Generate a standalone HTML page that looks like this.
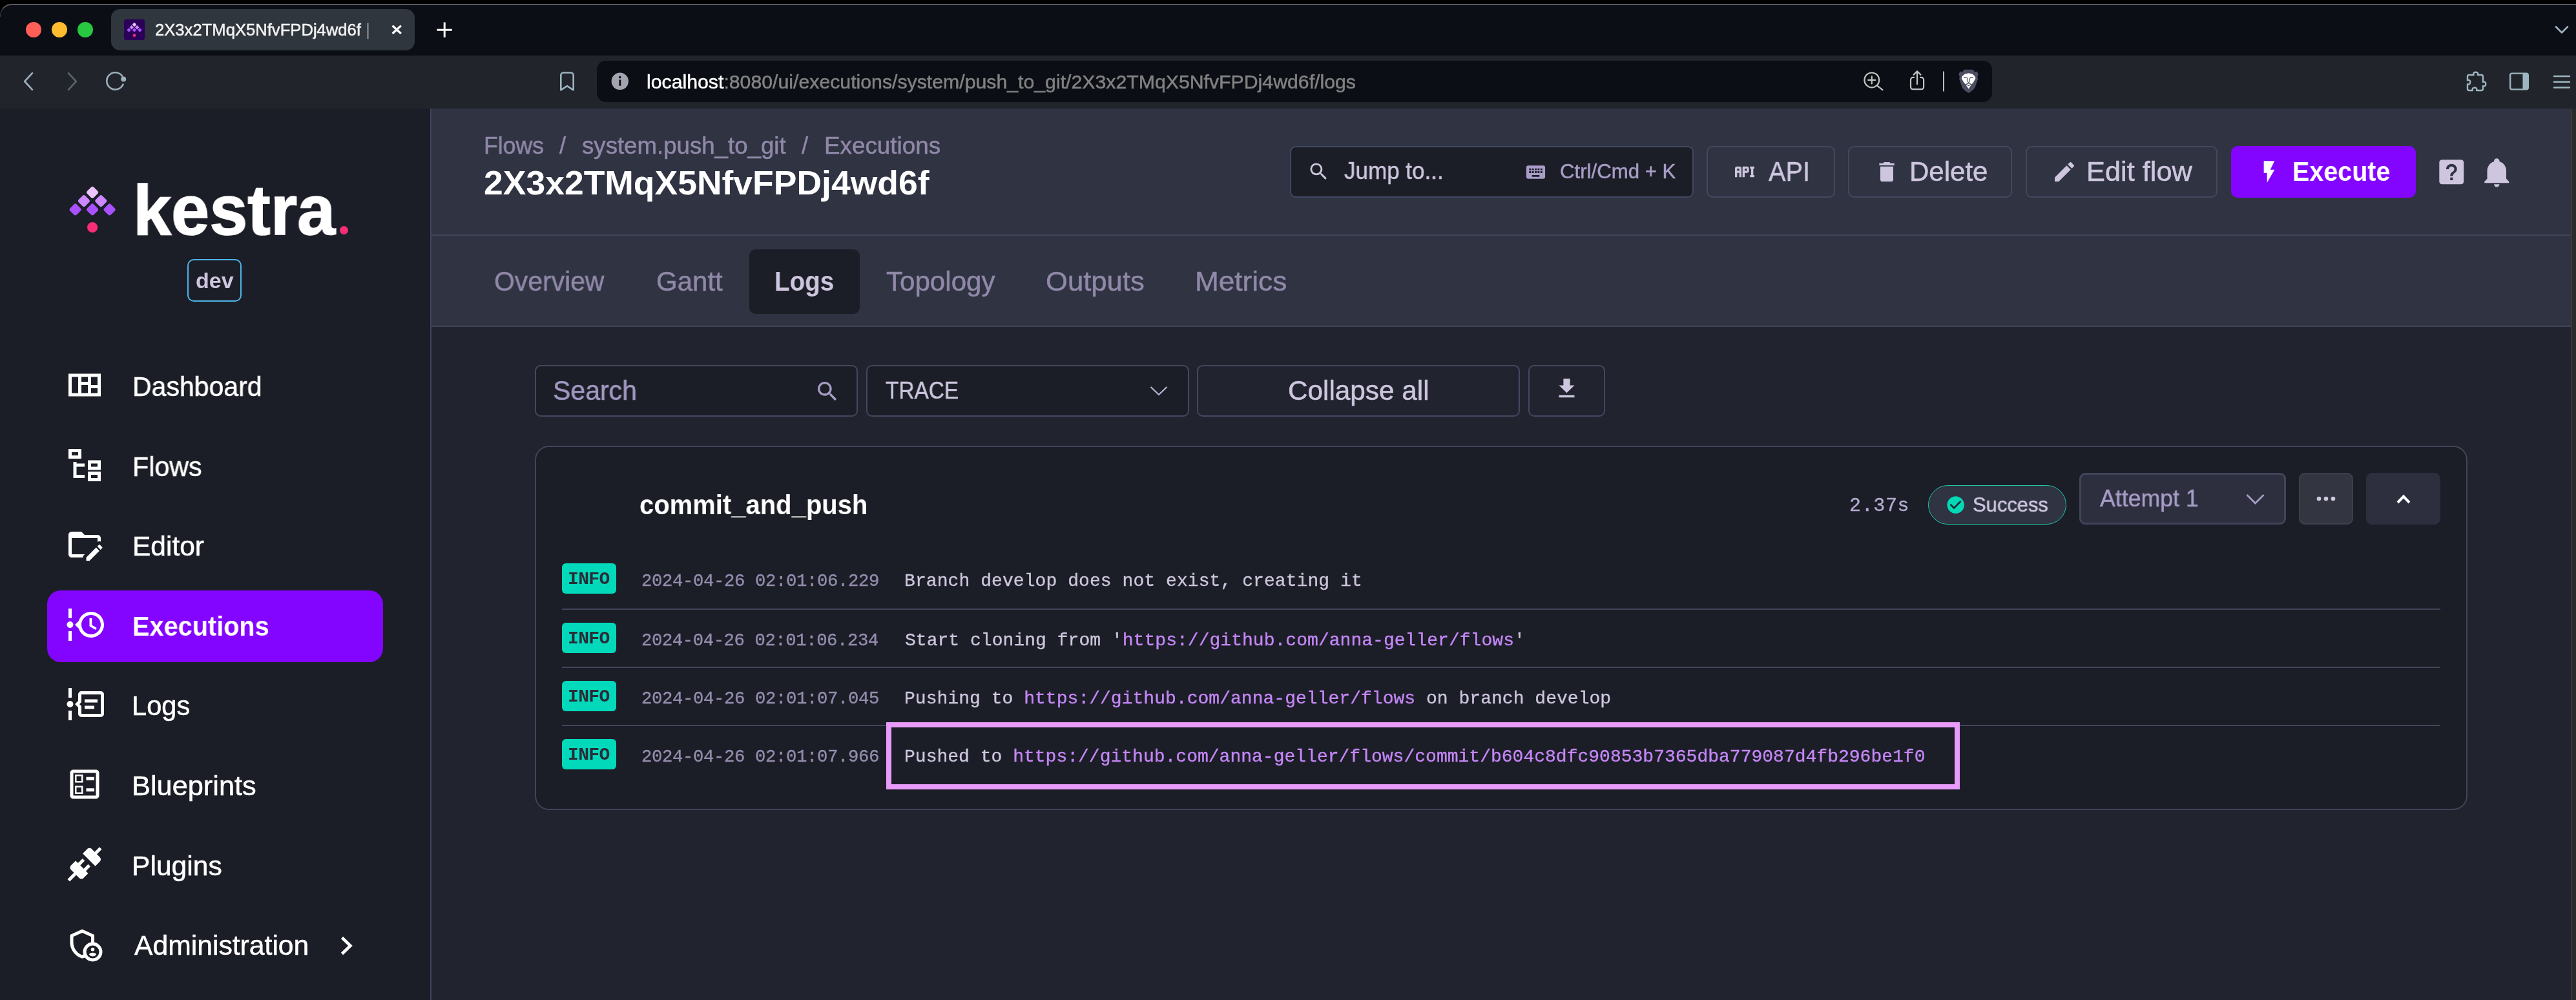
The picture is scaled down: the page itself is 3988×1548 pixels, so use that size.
<!DOCTYPE html>
<html lang="en">
<head>
<meta charset="utf-8">
<title>2X3x2TMqX5NfvFPDj4wd6f | Kestra</title>
<style>
*{box-sizing:border-box;margin:0;padding:0}
html,body{width:3988px;height:1548px;overflow:hidden;background:#000}
body{position:relative;font-family:"Liberation Sans",sans-serif;color:#fff}
.a{position:absolute}
.w{display:block;position:static}
.t{position:absolute;white-space:pre;line-height:1;transform-origin:0 0;will-change:transform}
.gs{will-change:transform}
.mono{font-family:"Liberation Mono",monospace}
.t{-webkit-text-stroke:0.5px currentColor}
.t.mono{-webkit-text-stroke:0.35px currentColor}
svg{position:absolute;overflow:visible}
/* ---------- browser chrome ---------- */
#win{left:0;top:7px;width:3988px;height:1541px;background:#0c0e16;border-radius:18px 0 0 0}
#topline{left:0;top:6px;width:3988px;height:20px;border-top:2px solid #5a5a5e;border-left:1px solid #3a3a3e;border-radius:18px 0 0 0}
#toolbar{left:0;top:86px;width:3988px;height:82px;background:#21252b}
#tab{left:172px;top:14px;width:470px;height:64px;background:#30363d;border-radius:14px}
#urlbar{left:924px;top:94px;width:2160px;height:64px;background:#0c0e16;border-radius:14px}
.dot{width:24px;height:24px;border-radius:50%;top:34px}
/* ---------- app ---------- */
#side{left:0;top:168px;width:666px;height:1380px;background:#1c1e27}
#sideb{left:666px;top:168px;width:2px;height:1380px;background:#404559}
#head{left:668px;top:168px;width:3312px;height:196px;background:#2f3342}
#headb{left:668px;top:363px;width:3312px;height:2px;background:#404559}
#tabs{left:668px;top:365px;width:3312px;height:140px;background:#2f3342}
#tabsb{left:668px;top:504px;width:3312px;height:2px;background:#404559}
#content{left:668px;top:506px;width:3312px;height:1042px;background:#21242e}
#scroll{left:3980px;top:168px;width:8px;height:1380px;background:#2b2b2b;border-left:2px solid #3a3a3a}
.box{border:2px solid #434860;border-radius:9px;background:#1c1e27}
.btn{border:2px solid #434860;border-radius:9px;background:#2f3342}
.c1{color:#cdc6de}
.c2{color:#9088a8}
.lnk{color:#c587f8}
</style>
</head>
<body>
<div class="a" id="win"></div>
  <!-- tab strip -->
  <div class="a dot" style="left:40px;background:#ff5f57"></div>
  <div class="a dot" style="left:80px;background:#febc2e"></div>
  <div class="a dot" style="left:120px;background:#28c840"></div>
  <div class="a" id="tab"></div>
  <!-- toolbar -->
  <div class="a" id="toolbar"></div>
  <div class="a" id="urlbar"></div>

  <!-- app -->
  <div class="a" id="side"></div>
  <div class="a" id="sideb"></div>
  <div class="a" id="head"></div>
  <div class="a" id="headb"></div>
  <div class="a" id="tabs"></div>
  <div class="a" id="tabsb"></div>
  <div class="a" id="content"></div>
  <div class="a" id="scroll"></div>
<!--CHROME-->
<header class="w">
<div class="t" id="tabtitle" style="left:240.0px;top:33.6px;font-size:25px;transform:scaleX(1.0249);color:#f2f2f2">2X3x2TMqX5NfvFPDj4wd6f <span style="color:#7d8186">|</span></div>
<div class="t" id="url" style="left:1001.0px;top:111.8px;font-size:30px;transform:scaleX(1.0083);color:#828282"><span style="color:#fff">localhost</span>:8080/ui/executions/system/push_to_git/2X3x2TMqX5NfvFPDj4wd6f/logs</div>
<svg style="left:0;top:0" width="3988" height="168" viewBox="0 0 3988 168" fill="none" stroke-linecap="round" stroke-linejoin="round">
<rect x="192" y="30" width="32" height="32" rx="3.5" fill="#2a0059"/>
<rect x="205.65" y="35.75" width="4.7" height="4.7" rx="0.7" fill="#ecc5ff" transform="rotate(45 208 38.1)"/>
<rect x="201.45" y="39.95" width="4.7" height="4.7" rx="0.7" fill="#cd88ff" transform="rotate(45 203.8 42.3)"/>
<rect x="209.85" y="39.95" width="4.7" height="4.7" rx="0.7" fill="#cd88ff" transform="rotate(45 212.2 42.3)"/>
<rect x="197.25" y="44.15" width="4.7" height="4.7" rx="0.7" fill="#a950ff" transform="rotate(45 199.6 46.5)"/>
<rect x="205.65" y="44.15" width="4.7" height="4.7" rx="0.7" fill="#a950ff" transform="rotate(45 208 46.5)"/>
<rect x="214.05" y="44.15" width="4.7" height="4.7" rx="0.7" fill="#a950ff" transform="rotate(45 216.4 46.5)"/>
<circle cx="208" cy="54.7" r="2.3" fill="#f62e76"/>
<path d="M607.6 39.8L620.8 52M620.8 39.8L607.6 52" stroke="#fff" stroke-width="3.2" stroke-linecap="butt"/>
<path d="M676.5 46.2H699.8M688.2 34.5V57.8" stroke="#fff" stroke-width="3" stroke-linecap="butt"/>
<path d="M3957 41.5L3966 50.5L3975 41.5" stroke="#9db5c0" stroke-width="2.6"/>
<path d="M50 113.2L38.2 126L50 138.8" stroke="#9db0bb" stroke-width="2.6"/>
<path d="M106 113.2L117.8 126L106 138.8" stroke="#59636b" stroke-width="2.6"/>
<path d="M190.6 130.6A13.2 13.2 0 1 1 189.4 118.0" stroke="#9db0bb" stroke-width="2.6"/>
<circle cx="191.2" cy="122.6" r="4" fill="#9db0bb"/>
<path d="M868.3 139.3V116.5A4 4 0 0 1 872.3 112.5H883.7A4 4 0 0 1 887.7 116.5V139.3L878 133.2Z" stroke="#9db5c0" stroke-width="2.6"/>
<circle cx="959.8" cy="125.8" r="13.2" fill="#a3a4b0"/>
<rect x="958.4" y="123.4" width="2.9" height="9.4" fill="#0c0e16"/><circle cx="959.8" cy="119.6" r="1.8" fill="#0c0e16"/>
<circle cx="2897.8" cy="123.9" r="11.4" stroke="#c3c3c3" stroke-width="2.2"/>
<path d="M2892.3 123.9H2903.3M2897.8 118.4V129.4M2906.2 132.6L2914.4 139.2" stroke="#c3c3c3" stroke-width="2.2"/>
<path d="M2963 119.9H2961.5A3.5 3.5 0 0 0 2958 123.4V134.7A3.5 3.5 0 0 0 2961.5 138.2H2974.6A3.5 3.5 0 0 0 2978.1 134.7V123.4A3.5 3.5 0 0 0 2974.6 119.9H2973" stroke="#c3c3c3" stroke-width="2.2"/>
<path d="M2968 130.2V110.6M2962.6 115.6L2968 110.2L2973.4 115.6" stroke="#c3c3c3" stroke-width="2.2"/>
<path d="M3009 110.4V141.4" stroke="#bdbdbd" stroke-width="2" stroke-linecap="butt"/>
<path d="M3041 107.8H3054.2L3057.5 111.4L3061 110.6L3062.8 115.4L3061.4 118.6L3062 122.5L3057.6 135.2C3056.4 138 3052 141.2 3047.6 144C3043.2 141.2 3038.8 138 3037.6 135.2L3033.2 122.5L3033.8 118.6L3032.4 115.4L3034.2 110.6L3037.7 111.4Z" fill="#4c4d5f" stroke="none"/>
<path d="M3047.6 113.2L3053.4 114.4L3057.6 118.2L3058.4 121.6L3055 127.6L3052 131L3047.6 137.6L3043.2 131L3040.2 127.6L3036.8 121.6L3037.6 118.2L3041.8 114.4Z" fill="#fff" stroke="none"/>
<path d="M3040.6 119.6L3045.4 120.6L3046.4 126.6L3047.6 127.6L3048.8 126.6L3049.8 120.6L3054.6 119.6M3043.2 130.4L3047.6 128.8L3052 130.4L3047.6 132.6Z" stroke="#4c4d5f" stroke-width="1.1" fill="none"/>
<path d="M3822.5 116H3829.6C3826.6 110.3 3838.9 110.3 3835.9 116H3841.5A2.5 2.5 0 0 1 3844 118.5V127C3849.7 124 3849.7 136 3844 133V137.5A2.5 2.5 0 0 1 3841.5 140H3834C3837 134.3 3825 134.3 3828 140H3822.5A2.5 2.5 0 0 1 3820 137.5V130.2C3825.7 133 3825.7 121.5 3820 124.3V118.5A2.5 2.5 0 0 1 3822.5 116Z" stroke="#9db5c0" stroke-width="2.4"/>
<rect x="3886.2" y="113.6" width="27.6" height="24.8" rx="2.6" stroke="#9db5c0" stroke-width="2.4"/><path d="M3905.5 113.6H3911.2A2.6 2.6 0 0 1 3913.8 116.2V135.8A2.6 2.6 0 0 1 3911.2 138.4H3905.5Z" fill="#9db5c0" stroke="none"/>
<path d="M3954 118H3978M3954 126.7H3978M3954 135.5H3978" stroke="#9db5c0" stroke-width="2.4"/>
</svg>
</header>
<!--CHROMEEND-->
<!--SIDE-->
<nav class="w">
<svg style="left:100px;top:280px" width="90" height="90" viewBox="100 280 90 90">
<rect x="135.9" y="290.6" width="14.4" height="14.4" rx="3.2" fill="#ecc5ff" transform="rotate(45 143.1 297.8)"/>
<rect x="122.7" y="303.9" width="14.4" height="14.4" rx="3.2" fill="#cd88ff" transform="rotate(45 129.9 311.1)"/>
<rect x="149.1" y="303.9" width="14.4" height="14.4" rx="3.2" fill="#cd88ff" transform="rotate(45 156.3 311.1)"/>
<rect x="109.4" y="317.2" width="14.4" height="14.4" rx="3.2" fill="#a950ff" transform="rotate(45 116.6 324.4)"/>
<rect x="135.9" y="317.2" width="14.4" height="14.4" rx="3.2" fill="#a950ff" transform="rotate(45 143.1 324.4)"/>
<rect x="162.4" y="317.2" width="14.4" height="14.4" rx="3.2" fill="#a950ff" transform="rotate(45 169.6 324.4)"/>
<circle cx="143.1" cy="352" r="8.1" fill="#f62e76"/></svg>
<div class="t" id="logo" style="left:206.0px;top:270.7px;font-size:109px;transform:scaleX(0.9752);font-weight:bold;-webkit-text-stroke:1.6px #fff">kestra</div>
<div class="a" style="left:526px;top:350px;width:13px;height:13px;border-radius:50%;background:#f62e76"></div>
<div class="a" style="left:290px;top:401px;width:84px;height:66px;border:2px solid #4cb5e8;border-radius:10px"></div>
<div class="t c1" id="dev" style="left:302.5px;top:417.1px;font-size:34px;font-weight:bold;-webkit-text-stroke:0">dev</div>
<div class="a" style="left:73px;top:914px;width:520px;height:111px;border-radius:21px;background:#8405ff"></div>
<svg style="left:101px;top:566.0px" width="60" height="60" viewBox="0 0 24 24" fill="#fff"><path fill-rule="evenodd" d="M2 5V19H22V5ZM4 7H8V17H4ZM10 7H14V10H10ZM10 12H14V17H10ZM16 7H20V12H16ZM16 14H20V17H16Z"/></svg>
<div class="t" id="m0" style="left:205.0px;top:578.0px;font-size:41.6px;transform:scaleX(0.9858)">Dashboard</div>
<svg style="left:101px;top:689.6px" width="60" height="60" viewBox="0 0 24 24" fill="#fff"><path d="M12 13H7V18H12V20H5V10H7V11H12V13M8 4V6H4V4H8M10 2H2V8H10V2M20 11V13H16V11H20M22 9H14V15H22V9M20 18V20H16V18H20M22 16H14V22H22V16Z"/></svg>
<div class="t" id="m1" style="left:205.0px;top:701.6px;font-size:41.6px;transform:scaleX(0.9916)">Flows</div>
<svg style="left:101px;top:813.2px" width="60" height="60" viewBox="0 0 24 24" fill="#fff"><path d="M4 18H12.13L11 19.13V20H4C2.9 20 2 19.11 2 18V6C2 4.89 2.89 4 4 4H10L12 6H20C21.1 6 22 6.89 22 8V10.15C21.74 10.06 21.46 10 21.17 10C20.75 10 20.36 10.11 20 10.3V8H4V18M22.85 13.47L21.53 12.15C21.33 11.95 21 11.95 20.81 12.15L19.83 13.13L21.87 15.17L22.85 14.19C23.05 14 23.05 13.67 22.85 13.47M13 19.96V22H15.04L21.17 15.88L19.13 13.83L13 19.96Z"/></svg>
<div class="t" id="m2" style="left:205.0px;top:825.2px;font-size:41.6px;transform:scaleX(1.0210)">Editor</div>
<svg style="left:101px;top:936.8px" width="60" height="60" viewBox="0 0 24 24" fill="#fff"><path d="M4 2V8H2V2H4M2 22H4V16H2V22M5 12C5 13.11 4.11 14 3 14C1.9 14 1 13.11 1 12C1 10.9 1.9 10 3 10C4.11 10 5 10.9 5 12M16 4C20.42 4 24 7.58 24 12C24 16.42 20.42 20 16 20C12.4 20 9.36 17.62 8.35 14.35L6 12L8.35 9.65C9.36 6.38 12.4 4 16 4M16 6C12.69 6 10 8.69 10 12C10 15.31 12.69 18 16 18C19.31 18 22 15.31 22 12C22 8.69 19.31 6 16 6M15 13V8H16.5V12.2L19.5 14L18.75 15.23L15 13Z"/></svg>
<div class="t" id="m3" style="left:205.0px;top:948.8px;font-size:41.6px;transform:scaleX(0.9540);font-weight:bold;-webkit-text-stroke:0">Executions</div>
<svg style="left:101px;top:1060.4px" width="60" height="60" viewBox="0 0 24 24" fill="#fff"><path fill-rule="evenodd" d="M5 12A2 2 0 1 1 1 12A2 2 0 1 1 5 12M4 2V8H2V2ZM2 16H4V22H2ZM24 6V18A2 2 0 0 1 22 20H10A2 2 0 0 1 8 18V14L6 12L8 10V6A2 2 0 0 1 10 4H22A2 2 0 0 1 24 6M10 6V10.8L8.8 12L10 13.2V18H22V6ZM12 9H20V11H12ZM12 13H18V15H12Z"/></svg>
<div class="t" id="m4" style="left:204.0px;top:1072.4px;font-size:41.6px">Logs</div>
<svg style="left:101px;top:1184.0px" width="60" height="60" viewBox="0 0 24 24" fill="#fff"><path d="M13 7.5H18V9.5H13V7.5M13 14.5H18V16.5H13V14.5M19 3C20.1 3 21 3.9 21 5V19C21 20.1 20.1 21 19 21H5C3.9 21 3 20.1 3 19V5C3 3.9 3.9 3 5 3H19M19 19V5H5V19H19M11 6V11H6V6H11M10 10V7H7V10H10M11 13V18H6V13H11M10 17V14H7V17H10Z"/></svg>
<div class="t" id="m5" style="left:204.0px;top:1196.0px;font-size:41.6px;transform:scaleX(1.0419)">Blueprints</div>
<svg style="left:101px;top:1307.6px" width="60" height="60" viewBox="0 0 24 24" fill="#fff"><path d="M21.4 7.5C22.2 8.3 22.2 9.6 21.4 10.3L18.6 13.1L10.8 5.3L13.6 2.5C14.4 1.7 15.7 1.7 16.4 2.5L18.2 4.3L21.2 1.3L22.6 2.7L19.6 5.7L21.4 7.5M15.6 13.3L14.2 11.9L11.4 14.7L9.3 12.6L12.1 9.8L10.7 8.4L7.9 11.2L6.4 9.8L3.6 12.6C2.8 13.4 2.8 14.7 3.6 15.4L5.4 17.2L1.4 21.2L2.8 22.6L6.8 18.6L8.6 20.4C9.4 21.2 10.7 21.2 11.4 20.4L14.2 17.6L12.8 16.2L15.6 13.3Z"/></svg>
<div class="t" id="m6" style="left:204.0px;top:1319.6px;font-size:41.6px;transform:scaleX(1.0249)">Plugins</div>
<svg style="left:101px;top:1431.2px" width="60" height="60" viewBox="0 0 24 24" fill="#fff"><path fill="none" stroke="#fff" stroke-width="2" d="M17 11.3V7L10.5 4.1L4 7V11.2C4 15.2 6.8 19 10.5 20C11 19.9 11.5 19.7 12 19.4"/><circle cx="17" cy="17" r="5" fill="#1c1e27" stroke="#fff" stroke-width="2"/><circle cx="17" cy="15.5" r="1.1"/><path d="M17 19.8C16.1 19.8 15.3 19.3 14.8 18.6C14.8 17.9 16.3 17.5 17 17.5S19.2 17.9 19.2 18.6C18.7 19.3 17.9 19.8 17 19.8Z"/></svg>
<div class="t" id="m7" style="left:208.0px;top:1443.2px;font-size:41.6px;transform:scaleX(1.0257)">Administration</div>
<svg style="left:520px;top:1444px" width="40" height="40" viewBox="0 0 40 40"><path d="M9.5 7.5L22.5 20L9.5 32.5" fill="none" stroke="#fff" stroke-width="4.6"/></svg>
</nav>
<!--HEAD-->
<header class="w">
<div class="t c2" id="bc1" style="left:748.5px;top:207.5px;font-size:36.4px;transform:scaleX(0.9784)">Flows</div>
<div class="t c2" id="bc2" style="left:865.6px;top:207.5px;font-size:36.4px">/</div>
<div class="t c2" id="bc3" style="left:901.0px;top:207.5px;font-size:36.4px;transform:scaleX(1.0066)">system.push_to_git</div>
<div class="t c2" id="bc4" style="left:1241.0px;top:207.5px;font-size:36.4px">/</div>
<div class="t c2" id="bc5" style="left:1276.0px;top:207.5px;font-size:36.4px;transform:scaleX(1.0117)">Executions</div>
<div class="t" id="title" style="left:749.0px;top:257.3px;font-size:52px;transform:scaleX(1.0284);font-weight:bold;-webkit-text-stroke:0">2X3x2TMqX5NfvFPDj4wd6f</div>
<div class="a box" style="left:1997px;top:226px;width:625px;height:80px"></div>
<svg style="left:2023.6px;top:247.9px" width="35" height="35" viewBox="0 0 24 24" fill="#cdc6de"><path d="M9.5,3A6.5,6.5 0 0,1 16,9.5C16,11.11 15.41,12.59 14.44,13.73L14.71,14H15.5L20.5,19L19,20.5L14,15.5V14.71L13.73,14.44C12.59,15.41 11.11,16 9.5,16A6.5,6.5 0 0,1 3,9.5A6.5,6.5 0 0,1 9.5,3M9.5,5C7,5 5,7 5,9.5C5,12 7,14 9.5,14C12,14 14,12 14,9.5C14,7 12,5 9.5,5Z"/></svg>
<div class="t c1" id="jump" style="left:2080.5px;top:247.1px;font-size:36.4px;transform:scaleX(0.9615)">Jump to...</div>
<svg style="left:2360px;top:248.5px" width="35" height="35" viewBox="0 0 24 24" fill="#a79dc6"><path d="M19,10H17V8H19M19,13H17V11H19M16,10H14V8H16M16,13H14V11H16M16,17H8V15H16M7,10H5V8H7M7,13H5V11H7M8,11H10V13H8M8,8H10V10H8M11,11H13V13H11M11,8H13V10H11M20,5H4C2.89,5 2,5.89 2,7V17A2,2 0 0,0 4,19H20A2,2 0 0,0 22,17V7C22,5.89 21.1,5 20,5Z"/></svg>
<div class="t" id="ctrl" style="left:2415.0px;top:249.9px;font-size:31.2px;color:#a79dc6">Ctrl/Cmd + K</div>
<div class="a btn" style="left:2642px;top:226px;width:199px;height:80px"></div>
<svg style="left:2681px;top:246px" width="40" height="40" viewBox="0 0 24 24" fill="#cdc6de"><path d="M7 7H5A2 2 0 0 0 3 9V17H5V13H7V17H9V9A2 2 0 0 0 7 7M7 11H5V9H7M14 7H10V17H12V13H14A2 2 0 0 0 16 11V9A2 2 0 0 0 14 7M14 11H12V9H14M20 9V15H21V17H17V15H18V9H17V7H21V9Z"/></svg>
<div class="t c1" id="api" style="left:2738.0px;top:244.8px;font-size:41.6px;transform:scaleX(0.9535)">API</div>
<div class="a btn" style="left:2861px;top:226px;width:254px;height:80px"></div>
<svg style="left:2901px;top:246px" width="40" height="40" viewBox="0 0 24 24" fill="#cdc6de"><path d="M19,4H15.5L14.5,3H9.5L8.5,4H5V6H19M6,19A2,2 0 0,0 8,21H16A2,2 0 0,0 18,19V7H6V19Z"/></svg>
<div class="t c1" id="delete" style="left:2955.5px;top:244.8px;font-size:41.6px;transform:scaleX(1.0105)">Delete</div>
<div class="a btn" style="left:3136px;top:226px;width:297px;height:80px"></div>
<svg style="left:3176px;top:246px" width="40" height="40" viewBox="0 0 24 24" fill="#cdc6de"><path d="M20.71,7.04C21.1,6.65 21.1,6 20.71,5.63L18.37,3.29C18,2.9 17.35,2.9 16.96,3.29L15.12,5.12L18.87,8.87M3,17.25V21H6.75L17.81,9.93L14.06,6.18L3,17.25Z"/></svg>
<div class="t c1" id="editflow" style="left:3230.0px;top:244.8px;font-size:41.6px;transform:scaleX(1.0420)">Edit flow</div>
<div class="a" style="left:3454px;top:226px;width:286px;height:80px;border-radius:10px;background:#8405ff"></div>
<svg style="left:3493px;top:246px" width="40" height="40" viewBox="0 0 24 24" fill="#fff"><path d="M7,2V13H10V22L17,10H13L17,2H7Z"/></svg>
<div class="t" id="execute" style="left:3549.0px;top:244.8px;font-size:41.6px;transform:scaleX(0.9484);font-weight:bold;-webkit-text-stroke:0">Execute</div>
<svg style="left:3769.7px;top:240.7px" width="50.6" height="50.6" viewBox="0 0 24 24" fill="#cdc6de"><path d="M11,18H13V16H11V18M12,6A4,4 0 0,0 8,10H10A2,2 0 0,1 12,8A2,2 0 0,1 14,10C14,12 11,11.75 11,15H13C13,12.75 16,12.5 16,10A4,4 0 0,0 12,6M5,3H19A2,2 0 0,1 21,5V19A2,2 0 0,1 19,21H5A2,2 0 0,1 3,19V5A2,2 0 0,1 5,3Z"/></svg>
<svg style="left:3839.7px;top:240.6px" width="50.6" height="50.6" viewBox="0 0 24 24" fill="#cdc6de"><path d="M21,19V20H3V19L5,17V11C5,7.9 7.03,5.17 10,4.29C10,4.19 10,4.1 10,4A2,2 0 0,1 12,2A2,2 0 0,1 14,4C14,4.1 14,4.19 14,4.29C16.97,5.17 19,7.9 19,11V17L21,19M14,21A2,2 0 0,1 12,23A2,2 0 0,1 10,21"/></svg>
</header>
<!--TABS-->
<nav class="w">
<div class="a" style="left:1160px;top:386px;width:171px;height:100px;border-radius:10px;background:#1c1e27"></div>
<div class="t c2" id="tb1" style="left:765.0px;top:414.8px;font-size:41.6px;transform:scaleX(0.9827)">Overview</div>
<div class="t c2" id="tb2" style="left:1016.0px;top:414.8px;font-size:41.6px;transform:scaleX(1.0101)">Gantt</div>
<div class="t c1" id="tb3" style="left:1199.0px;top:414.8px;font-size:41.6px;transform:scaleX(0.9280);font-weight:bold;-webkit-text-stroke:0">Logs</div>
<div class="t c2" id="tb4" style="left:1372.0px;top:414.8px;font-size:41.6px;transform:scaleX(1.0120)">Topology</div>
<div class="t c2" id="tb5" style="left:1619.0px;top:414.8px;font-size:41.6px;transform:scaleX(1.0487)">Outputs</div>
<div class="t c2" id="tb6" style="left:1850.0px;top:414.8px;font-size:41.6px;transform:scaleX(1.0611)">Metrics</div>
</nav>
<!--FILTER-->
<section class="w">
<div class="a box" style="left:828px;top:565px;width:500px;height:80px"></div>
<div class="t" id="search" style="left:856.0px;top:584.2px;font-size:41.6px;transform:scaleX(0.9858);color:#a198c0">Search</div>
<svg style="left:1261px;top:586.2px" width="40" height="40" viewBox="0 0 24 24" fill="#a79dc6"><path d="M9.5,3A6.5,6.5 0 0,1 16,9.5C16,11.11 15.41,12.59 14.44,13.73L14.71,14H15.5L20.5,19L19,20.5L14,15.5V14.71L13.73,14.44C12.59,15.41 11.11,16 9.5,16A6.5,6.5 0 0,1 3,9.5A6.5,6.5 0 0,1 9.5,3M9.5,5C7,5 5,7 5,9.5C5,12 7,14 9.5,14C12,14 14,12 14,9.5C14,7 12,5 9.5,5Z"/></svg>
<div class="a box" style="left:1341px;top:565px;width:500px;height:80px"></div>
<div class="t c1" id="trace" style="left:1371.0px;top:586.6px;font-size:36.4px;transform:scaleX(0.9174)">TRACE</div>
<svg style="left:1776px;top:590px" width="36" height="30" viewBox="0 0 36 30"><path d="M5.5 9L18 21L30.5 9" fill="none" stroke="#b9b1d2" stroke-width="2.3"/></svg>
<div class="a box" style="left:1853px;top:565px;width:500px;height:80px;background:none"></div>
<div class="t c1" id="collapse" style="left:1993.5px;top:584.2px;font-size:41.6px;transform:scaleX(1.0164)">Collapse all</div>
<div class="a box" style="left:2366px;top:565px;width:119px;height:80px;background:none"></div>
<svg style="left:2404.5px;top:581px" width="41" height="41" viewBox="0 0 24 24" fill="#cdc6de"><path d="M5,20H19V18H5M19,9H15V3H9V9H5L12,16L19,9Z"/></svg>
</section>
<!--CARD-->
<main class="w">
<div class="a" style="left:828px;top:690px;width:2992px;height:564px;border:2px solid #404559;border-radius:22px;background:#1c1e27"></div>
<div class="t" id="task" style="left:990.0px;top:761.2px;font-size:41.6px;transform:scaleX(0.9615);font-weight:bold;-webkit-text-stroke:0">commit_and_push</div>
<div class="t mono" id="dur" style="left:2863.0px;top:767.7px;font-size:30px;letter-spacing:0.625px;color:#b4abcf">2.37s</div>
<div class="a" style="left:2985px;top:751px;width:214px;height:61px;border:1.5px solid #1fc7a6;border-radius:31px;background:#2f3342"></div>
<svg style="left:3012px;top:766px" width="31.4" height="31.4" viewBox="0 0 24 24" fill="#03d8b5"><path d="M12 2C6.5 2 2 6.5 2 12S6.5 22 12 22 22 17.5 22 12 17.5 2 12 2M10 17L5 12L6.41 10.59L10 14.17L17.59 6.58L19 8L10 17Z"/></svg>
<div class="a" style="left:3019px;top:773px;width:17px;height:17px;border-radius:50%;background:#1e2a33;z-index:-0"></div>
<svg style="left:3012px;top:766px" width="31.4" height="31.4" viewBox="0 0 24 24" fill="#03d8b5"><path d="M12 2C6.5 2 2 6.5 2 12S6.5 22 12 22 22 17.5 22 12 17.5 2 12 2M10 17L5 12L6.41 10.59L10 14.17L17.59 6.58L19 8L10 17Z"/></svg>
<div class="t c1" id="succ" style="left:3053.5px;top:765.9px;font-size:31.2px;transform:scaleX(0.9915)">Success</div>
<div class="a" style="left:3219px;top:732px;width:320px;height:80px;border:3px solid #41455b;border-radius:9px;background:#2d2f3f"></div>
<div class="t" id="att" style="left:3250.5px;top:753.9px;font-size:36.4px;transform:scaleX(0.9805);color:#a79dc6">Attempt 1</div>
<svg style="left:3473px;top:758px" width="36" height="30" viewBox="0 0 36 30"><path d="M5.5 8L18.5 21L31.5 8" fill="none" stroke="#a79dc6" stroke-width="2.8"/></svg>
<div class="a" style="left:3559px;top:732px;width:84px;height:80px;border:2px solid #3d404c;border-radius:9px;background:#333641"></div>
<svg style="left:3585px;top:766px" width="32" height="12" viewBox="0 0 32 12"><circle cx="5" cy="6" r="3.3" fill="#cdc6de"/><circle cx="16" cy="6" r="3.3" fill="#cdc6de"/><circle cx="27" cy="6" r="3.3" fill="#cdc6de"/></svg>
<div class="a" style="left:3663px;top:732px;width:115px;height:80px;border-radius:9px;background:#2d2f3f"></div>
<svg style="left:3705px;top:760px" width="32" height="24" viewBox="0 0 32 24"><path d="M7 18L16 8.5L25 18" fill="none" stroke="#fff" stroke-width="4"/></svg>
<div class="a" style="left:870px;top:872.0px;width:84px;height:47px;border-radius:6px;background:#02d9ba"></div>
<div class="t mono" id="lv0" style="left:879.0px;top:882.7px;font-size:28px;letter-spacing:-0.667px;font-weight:bold;color:#2a2c37;-webkit-text-stroke:0">INFO</div>
<div class="t mono" id="ts0" style="left:993.0px;top:885.8px;font-size:27.3px;letter-spacing:-0.386px;color:#948cae">2024-04-26 02:01:06.229</div>
<div class="t mono" id="msg0" style="left:1400.0px;top:885.9px;font-size:28px;letter-spacing:0.073px;color:#cdc6de">Branch develop does not exist, creating it</div>
<div class="a" style="left:870px;top:942px;width:2908px;height:2px;background:#404559"></div>
<div class="a" style="left:870px;top:964.0px;width:84px;height:47px;border-radius:6px;background:#02d9ba"></div>
<div class="t mono" id="lv1" style="left:879.0px;top:974.7px;font-size:28px;letter-spacing:-0.667px;font-weight:bold;color:#2a2c37;-webkit-text-stroke:0">INFO</div>
<div class="t mono" id="ts1" style="left:993.0px;top:977.8px;font-size:27.3px;letter-spacing:-0.432px;color:#948cae">2024-04-26 02:01:06.234</div>
<div class="t mono" id="msg1" style="left:1401.0px;top:977.9px;font-size:28px;letter-spacing:0.036px;color:#cdc6de">Start cloning from '<span class="lnk">https://github.com/anna-geller/flows</span>'</div>
<div class="a" style="left:870px;top:1032px;width:2908px;height:2px;background:#404559"></div>
<div class="a" style="left:870px;top:1054.0px;width:84px;height:47px;border-radius:6px;background:#02d9ba"></div>
<div class="t mono" id="lv2" style="left:879.0px;top:1064.7px;font-size:28px;letter-spacing:-0.667px;font-weight:bold;color:#2a2c37;-webkit-text-stroke:0">INFO</div>
<div class="t mono" id="ts2" style="left:993.0px;top:1067.8px;font-size:27.3px;letter-spacing:-0.386px;color:#948cae">2024-04-26 02:01:07.045</div>
<div class="t mono" id="msg2" style="left:1400.0px;top:1067.9px;font-size:28px;letter-spacing:0.031px;color:#cdc6de">Pushing to <span class="lnk">https://github.com/anna-geller/flows</span> on branch develop</div>
<div class="a" style="left:870px;top:1122px;width:2908px;height:2px;background:#404559"></div>
<div class="a" style="left:870px;top:1144.0px;width:84px;height:47px;border-radius:6px;background:#02d9ba"></div>
<div class="t mono" id="lv3" style="left:879.0px;top:1154.7px;font-size:28px;letter-spacing:-0.667px;font-weight:bold;color:#2a2c37;-webkit-text-stroke:0">INFO</div>
<div class="t mono" id="ts3" style="left:993.0px;top:1157.8px;font-size:27.3px;letter-spacing:-0.386px;color:#948cae">2024-04-26 02:01:07.966</div>
<div class="t mono" id="msg3" style="left:1400.0px;top:1157.9px;font-size:28px;letter-spacing:0.011px;color:#cdc6de">Pushed to <span class="lnk">https://github.com/anna-geller/flows/commit/b604c8dfc90853b7365dba779087d4fb296be1f0</span></div>
<div class="a" style="left:1372px;top:1118px;width:1662px;height:104px;border:8px solid #e89bf9"></div>
</main>
<!--END-->
<div class="a" id="topline"></div>
</body>
</html>
